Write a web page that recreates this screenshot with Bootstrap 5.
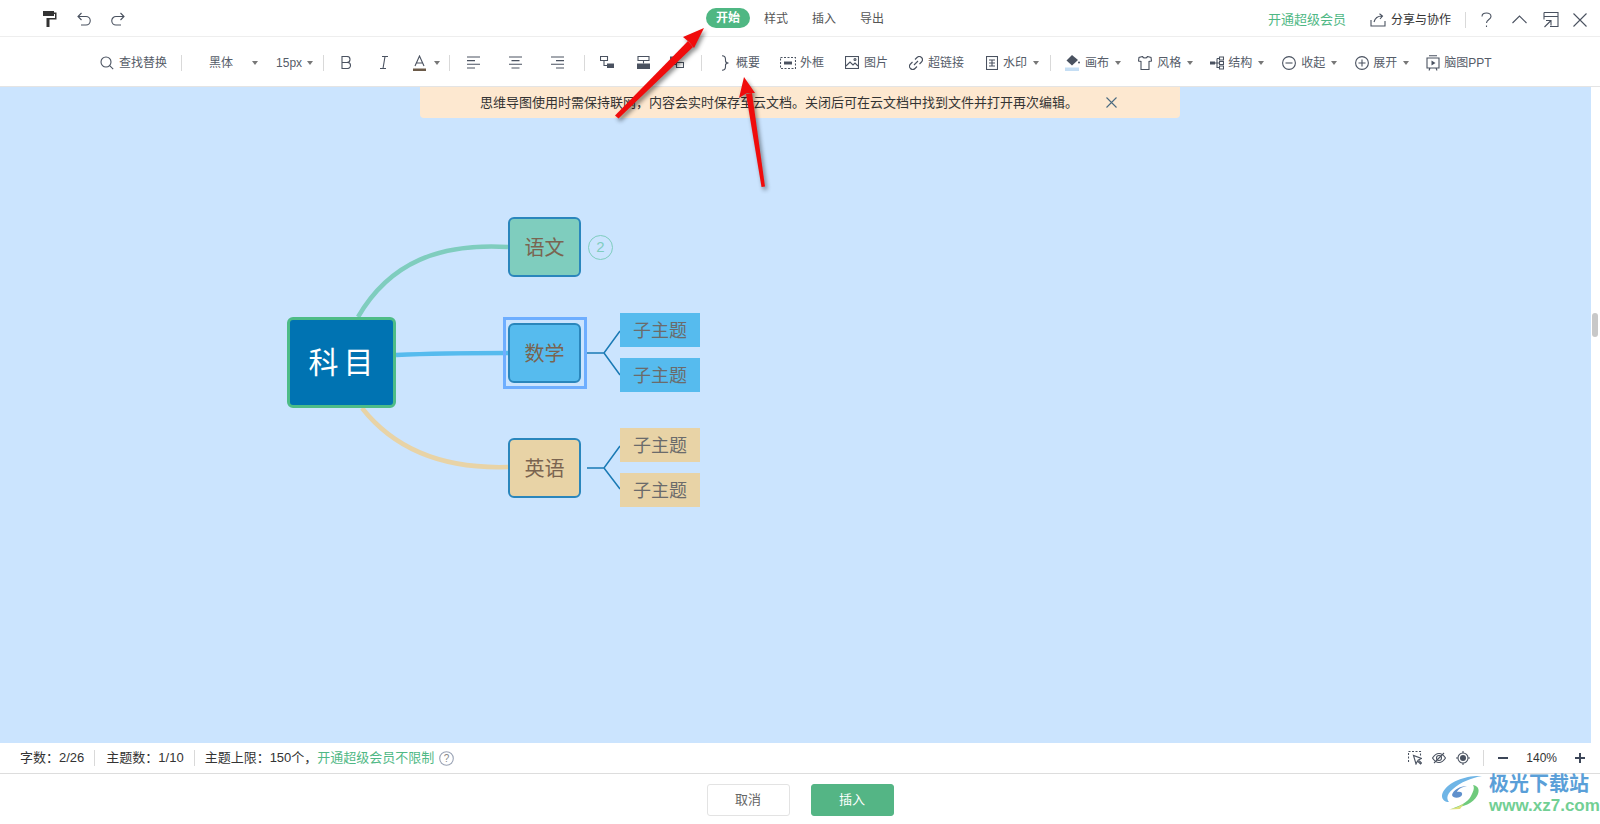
<!DOCTYPE html>
<html lang="zh-CN">
<head>
  <meta charset="UTF-8">
  <title>思维导图</title>
  <link href="https://cdn.jsdelivr.net/npm/bootstrap@5.3.0/dist/css/bootstrap.min.css" rel="stylesheet">
  <style>
    html, body { height: 100%; }
    body {
      font-family: "Liberation Sans", "Noto Sans CJK SC", sans-serif;
      font-size: 12px;
      color: #333;
      overflow: hidden;
      background: #fff;
    }
    svg { display: block; flex: none; }
    .ic { fill: none; stroke: #4a5260; stroke-width: 1.1; }
    .ic-fill { fill: #4a5260; stroke: none; }

    .top-bar { height: 37px; border-bottom: 1px solid #eee; padding-left: 43px; padding-top: 1px; }
    .tool-bar { height: 50px; border-bottom: 1px solid #e4e4e4; padding-left: 100px; padding-top: 2px; color: #555c68; }
    .tab-group { left: 706px; top: 8px; }
    .tab-item { width: 24px; white-space: nowrap; color: #555; padding-top: 1px; }
    .tab-on { width: 44px; height: 20px; border-radius: 10px; background: #4fb783; color: #fff; font-weight: 700; }
    .top-right { right: 13px; top: 1px; height: 37px; }
    .vip { color: #4fb885; font-size: 13px; }

    .sep { width: 1px; height: 16px; background: #d9d9d9; flex: none; }
    .caret-mini { width: 0; height: 0; border: 3px solid transparent; border-top: 4px solid #777; border-bottom: 0; flex: none; }
    .t-txt { white-space: nowrap; flex: none; }
    .t-15 { width: 25px; }
    .ml-4 { margin-left: 4px; } .ml-5 { margin-left: 5px; } .ml-6 { margin-left: 6px; } .ml-8 { margin-left: 8px; }
    .ml-9 { margin-left: 9px; } .ml-10 { margin-left: 10px; } .ml-11 { margin-left: 11px; } .ml-12 { margin-left: 12px; }
    .ml-13 { margin-left: 13px; } .ml-14 { margin-left: 14px; } .ml-15 { margin-left: 15px; } .ml-16 { margin-left: 16px; }
    .ml-17 { margin-left: 17px; } .ml-18 { margin-left: 18px; } .ml-19 { margin-left: 19px; }
    .ml-20 { margin-left: 20px; } .ml-21 { margin-left: 21px; } .ml-22 { margin-left: 22px; }
    .ml-23 { margin-left: 23px; } .ml-24 { margin-left: 24px; } .ml-25 { margin-left: 25px; } .ml-27 { margin-left: 27px; }
    .ml-29 { margin-left: 29px; }

    .map-area { background: #cbe4fe; margin-right: 9px; }
    .scroll-thumb { right: 2px; top: 226px; width: 6px; height: 24px; border-radius: 3px; background: #c8c8c8; }
    .notice-bar {
      left: 420px; top: 0; width: 760px; height: 31px;
      background: #fde8d0; border-radius: 0 0 4px 4px; padding-left: 60px;
      color: #333; font-size: 13px;
    }
    .notice-x { left: 686px; top: 10px; }

    .map-lines { left: 0; top: 0; }
    .node { display: flex; align-items: center; justify-content: center; position: absolute; font-family: "Noto Sans CJK SC", sans-serif; }
    .node-root { left: 287px; top: 230px; width: 109px; height: 91px; padding: 0 0 4px 4px; background: #0073b2; border: 3px solid #4ebc87; border-radius: 6px; color: #fff; font-size: 30px; letter-spacing: 5px; }
    .node-main { width: 73px; height: 60px; left: 508px; border: 2px solid #2a86bc; border-radius: 6px; color: #7a6450; font-size: 20px; }
    .nm-a { top: 130px; background: #7fcdbe; }
    .nm-b { top: 236px; background: #56bbee; }
    .nm-c { top: 351px; background: #e8d3a6; }
    .node-select { position: absolute; left: 503px; top: 230px; width: 84px; height: 72px; border: 3px solid #6eaeff; }
    .node-sub { width: 80px; height: 34px; left: 620px; padding-bottom: 2px; color: #6b6b6b; font-size: 18px; }
    .ns-blue { background: #56bbee; }
    .ns-tan { background: #e8d3a6; }
    .ns-1 { top: 226px; } .ns-2 { top: 271px; } .ns-3 { top: 341px; } .ns-4 { top: 386px; }
    .count-dot { position: absolute; left: 588px; top: 148px; width: 25px; height: 25px; border: 1.5px solid #7fcdbe; border-radius: 50%; color: #7fcdbe; font-size: 15px; display: flex; align-items: center; justify-content: center; }

    .status-bar { height: 31px; border-bottom: 1px solid #ddd; padding-left: 20px; padding-right: 15px; font-size: 13px; }
    .status-right { font-size: 12px; }
    .vip-link { color: #4fb885; }
    .foot-bar { height: 50px; padding-top: 10px; gap: 21px; }
    .btn-cancel, .btn-insert { width: 83px; height: 32px; padding: 0; font-size: 13px; border-radius: 3px; }
    .btn-cancel { background: #fff; border: 1px solid #e3e3e3; color: #666; }
    .btn-insert { background: #54b585; border: 1px solid #54b585; color: #fff; }

    .arrows { left: 0; top: 0; pointer-events: none; filter: drop-shadow(2px 3px 2px rgba(0,0,0,.45)); }
    .wm-box { left: 1441px; top: 770px; }
    .wm-text { margin-left: 6px; }
    .wm-name { font-family: "Noto Sans CJK SC", sans-serif; font-size: 20px; font-weight: 700; color: #5a9fd8; line-height: 26px; }
    .wm-url { font-size: 17px; font-weight: 700; color: #72cf94; line-height: 20px; }
  </style>
</head>
<body class="d-flex flex-column position-relative">

  <div class="top-bar d-flex align-items-center position-relative flex-none">
    <svg width="14" height="16" viewBox="0 0 14 16"><path fill="#333" d="M0 0h11v5H0zM11 1.500h2.500V8.500H6.500V16h-3V7h8.500V3h-1z"/></svg>
    <svg class="ml-20" width="14" height="14" viewBox="0 0 14 14"><path class="ic" d="M4.500 1 1 4.500 4.500 8M1 4.500h8a4 4 0 0 1 0 8.500H4"/></svg>
    <svg class="ml-20" width="14" height="14" viewBox="0 0 14 14"><path class="ic" d="M9.500 1 13 4.500 9.500 8M13 4.500H5a4 4 0 0 0 0 8.500h5"/></svg>

    <div class="tab-group position-absolute d-flex align-items-center">
      <div class="tab-on d-flex align-items-center justify-content-center">开始</div>
      <div class="tab-item ml-14">样式</div>
      <div class="tab-item ml-24">插入</div>
      <div class="tab-item ml-24">导出</div>
    </div>

    <div class="top-right position-absolute d-flex align-items-center">
      <span class="vip">开通超级会员</span>
      <svg class="ml-24" width="16" height="14" viewBox="0 0 16 14"><path class="ic" d="M1 7v6h14V8M4 9c1-4 4-6 8-6M9.500 .7 12.500 3 10 6"/></svg>
      <span class="ml-5">分享与协作</span>
      <div class="sep ml-14"></div>
      <svg class="ml-15" width="11" height="16" viewBox="0 0 11 16"><path class="ic" d="M1 4.500C1 2 3 1 5.500 1S10 2.500 10 4.500c0 3-4.500 3-4.500 6.500M5.500 13.500v1.500"/></svg>
      <svg class="ml-20" width="15" height="9" viewBox="0 0 15 9"><path class="ic" d="M.5 8 7.500 1l7 7"/></svg>
      <svg class="ml-16" width="16" height="17" viewBox="0 0 16 17"><path class="ic" d="M1 1.500h14v14H7M1 1.500v4h14M1 5.500v3M1.500 16 8 9.500M3 9.500h5v5"/></svg>
      <svg class="ml-14" width="14" height="14" viewBox="0 0 14 14"><path class="ic" stroke-width="1.3" d="m.5.5 13 13m0-13-13 13"/></svg>
    </div>
  </div>

  <div class="tool-bar d-flex align-items-center flex-none">
    <svg width="14" height="14" viewBox="0 0 14 14"><circle class="ic" cx="6" cy="6" r="5"/><path class="ic" d="m9.700 9.700 3.500 3.500"/></svg>
    <span class="t-txt ml-5">查找替换</span>
    <div class="sep ml-14"></div>
    <span class="t-txt ml-27">黑体</span>
    <div class="caret-mini ml-19"></div>
    <span class="t-txt t-15 ml-18">15px</span>
    <div class="caret-mini ml-6"></div>
    <div class="sep ml-10"></div>

    <svg class="ml-17" width="10" height="13" viewBox="0 0 10 13"><path class="ic" d="M1 .5h5a3 3 0 0 1 0 6H1zm0 6h5.500a3 3 0 0 1 0 6H1z"/></svg>
    <svg class="ml-29" width="8" height="13" viewBox="0 0 8 13"><path class="ic" d="M2 .5h6M0 12.500h6M5 .5l-2 12"/></svg>
    <svg class="ml-25" width="13" height="16" viewBox="0 0 13 16"><path class="ic" d="m2 11 4.500-10L11 11M3.500 8h6"/><path fill="#6b5a48" d="M0 13.500h13V16H0z"/></svg>
    <div class="caret-mini ml-8"></div>
    <div class="sep ml-9"></div>

    <svg class="ml-17" width="13" height="13" viewBox="0 0 13 13"><path class="ic" d="M0 1h13M0 4.600h8M0 8.300h13M0 12h8"/></svg>
    <svg class="ml-29" width="13" height="13" viewBox="0 0 13 13"><path class="ic" d="M0 1h13M2.500 4.600h8M0 8.300h13M2.500 12h8"/></svg>
    <svg class="ml-29" width="13" height="13" viewBox="0 0 13 13"><path class="ic" d="M0 1h13M5 4.600h8M0 8.300h13M5 12h8"/></svg>
    <div class="sep ml-20"></div>

    <svg class="ml-15" width="14" height="13" viewBox="0 0 14 13"><path class="ic" d="M.5.500h7v4h-7zM4 4.500v5h3"/><path class="ic-fill" d="M7 7.500h7V12H7z"/></svg>
    <svg class="ml-23" width="13" height="14" viewBox="0 0 13 14"><path class="ic" d="M1 .5h11v4H1zM6.500 4.500v3"/><path class="ic-fill" d="M0 7.500h13V13H0z"/></svg>
    <svg class="ml-20" width="14" height="13" viewBox="0 0 14 13"><path class="ic-fill" d="M0 .5h7V4H0z"/><path class="ic" d="M3.500 4v4.500H6M6.500 6.500h7v5h-7z"/></svg>
    <div class="sep ml-17"></div>

    <svg class="ml-19" width="9" height="16" viewBox="0 0 9 16"><path class="ic" d="M1 .7c3 0 3.500 1.500 3.500 3.500v1.500c0 1.500 1 2.300 3 2.300-2 0-3 .8-3 2.300v1.500c0 2-.5 3.500-3.500 3.500"/></svg>
    <span class="t-txt ml-6">概要</span>
    <svg class="ml-20" width="16" height="12" viewBox="0 0 16 12"><rect class="ic" stroke-dasharray="2 1.500" x=".5" y=".5" width="15" height="11"/><path class="ic-fill" d="M4 4.500h8v3H4z"/></svg>
    <span class="t-txt ml-4">外框</span>
    <svg class="ml-21" width="14" height="13" viewBox="0 0 14 13"><rect class="ic" x=".5" y=".5" width="13" height="12"/><path class="ic" d="m1 10 4-4 3 3 2-2 3 3"/><circle class="ic" cx="10" cy="3.500" r="1"/></svg>
    <span class="t-txt ml-5">图片</span>
    <svg class="ml-21" width="14" height="14" viewBox="0 0 14 14"><path class="ic" d="M6 3.500 8 1.500a3 3 0 0 1 4.500 4.500L10.500 8M8 10.500 6 12.500A3 3 0 0 1 1.500 8L3.500 6M5 9l4-4"/></svg>
    <span class="t-txt ml-5">超链接</span>
    <svg class="ml-22" width="12" height="14" viewBox="0 0 12 14"><rect class="ic" x=".5" y=".5" width="11" height="13"/><path class="ic" d="M3 4h6M3 7h6M3 10h6M6 4v6"/></svg>
    <span class="t-txt ml-5">水印</span>
    <div class="caret-mini ml-6"></div>
    <div class="sep ml-11"></div>

    <svg class="ml-14" width="15" height="16" viewBox="0 0 15 16"><path class="ic-fill" d="M7 0 13 5 7 10.500 1.500 5.500z"/><circle class="ic-fill" cx="14" cy="7.500" r="1"/><path fill="#c5def4" d="M0 12.500h14V16H0z"/></svg>
    <span class="t-txt ml-5">画布</span>
    <div class="caret-mini ml-6"></div>
    <svg class="ml-17" width="14" height="14" viewBox="0 0 14 14"><path class="ic" d="M4.500.5 1 1.500.5 5 3 5.500V13.500h8V5.500l2.500-.5L13 1.500 9.500.5C9 2.500 5 2.500 4.500.5z"/></svg>
    <span class="t-txt ml-5">风格</span>
    <div class="caret-mini ml-6"></div>
    <svg class="ml-17" width="14" height="14" viewBox="0 0 14 14"><path class="ic-fill" d="M0 5.500h5v3H0z"/><path class="ic" d="M5 7h4M7 2.500V11.500H9M7 2.500h2M9.500 1h4v3h-4zM9.500 5.500h4v3h-4zM9.500 10h4v3h-4z"/></svg>
    <span class="t-txt ml-4">结构</span>
    <div class="caret-mini ml-6"></div>
    <svg class="ml-18" width="14" height="14" viewBox="0 0 14 14"><circle class="ic" cx="7" cy="7" r="6.400"/><path class="ic" d="M3.500 7h7"/></svg>
    <span class="t-txt ml-5">收起</span>
    <div class="caret-mini ml-6"></div>
    <svg class="ml-18" width="14" height="14" viewBox="0 0 14 14"><circle class="ic" cx="7" cy="7" r="6.400"/><path class="ic" d="M3.500 7h7M7 3.500v7"/></svg>
    <span class="t-txt ml-4">展开</span>
    <div class="caret-mini ml-6"></div>
    <svg class="ml-17" width="14" height="16" viewBox="0 0 14 16"><path class="ic" d="M3 .7h8M1 3h12v10H1zM3 15.500 4 13m7 2.500L10 13"/><path class="ic-fill" d="M5.500 5.500 9.500 8l-4 2.500z"/></svg>
    <span class="t-txt ml-4">脑图PPT</span>
  </div>

  <div class="flex-grow-1 d-flex position-relative">
    <div class="map-area flex-grow-1 position-relative overflow-hidden">
      <svg class="map-lines position-absolute" width="1591" height="656" viewBox="0 87 1591 656" fill="none">
        <path d="M358 317C390 262 440 243 508 247" stroke="#7fcdbe" stroke-width="4.500"/>
        <path d="M396 355C440 353 470 353 508 353" stroke="#56bbee" stroke-width="4.500"/>
        <path d="M362 408C395 450 445 469 508 467" stroke="#e8d3a6" stroke-width="4.500"/>
        <path d="M587 353H604L620 331M604 353 620 375M587 468H604L620 446M604 468 620 489" stroke="#1a7ab5" stroke-width="1.500"/>
      </svg>

      <div class="node node-root">科目</div>
      <div class="node node-main nm-a">语文</div>
      <div class="count-dot">2</div>
      <div class="node-select"></div>
      <div class="node node-main nm-b">数学</div>
      <div class="node node-main nm-c">英语</div>
      <div class="node node-sub ns-blue ns-1">子主题</div>
      <div class="node node-sub ns-blue ns-2">子主题</div>
      <div class="node node-sub ns-tan ns-3">子主题</div>
      <div class="node node-sub ns-tan ns-4">子主题</div>

      <div class="notice-bar position-absolute d-flex align-items-center">
        思维导图使用时需保持联网，内容会实时保存至云文档。关闭后可在云文档中找到文件并打开再次编辑。
        <svg class="notice-x position-absolute" width="11" height="11" viewBox="0 0 11 11"><path d="m.5.5 10 10m0-10-10 10" stroke="#4a6a80" stroke-width="1.100"/></svg>
      </div>
    </div>
    <div class="scroll-thumb position-absolute"></div>
  </div>

  <div class="status-bar d-flex align-items-center flex-none">
    <span>字数：2/26</span>
    <div class="sep ml-10"></div>
    <span class="ml-11">主题数：1/10</span>
    <div class="sep ml-10"></div>
    <span class="ml-10">主题上限：150个，</span><span class="vip-link">开通超级会员不限制</span>
    <svg class="ml-5" width="15" height="15" viewBox="0 0 15 15"><circle cx="7.500" cy="7.500" r="6.800" fill="none" stroke="#9aa3b5" stroke-width="1.100"/><text x="7.500" y="11" text-anchor="middle" font-size="10" fill="#888">?</text></svg>

    <div class="status-right ms-auto d-flex align-items-center">
      <svg width="14" height="14" viewBox="0 0 14 14"><path class="ic" stroke-dasharray="2 1.500" d="M.5 11V.5h12V5"/><path class="ic" d="m5.500 4.500 2.500 8.500 1.500-3 3 3 1-1-3-3 3-1.500z"/></svg>
      <svg class="ml-10" width="14" height="12" viewBox="0 0 14 12"><path class="ic" d="M.5 6C3 2 5 1.500 7 1.500S11 2 13.500 6C11 10 9 10.500 7 10.500S3 10 .5 6z"/><circle class="ic" cx="7" cy="6" r="2.500"/><path class="ic" d="M2 11 12 1"/></svg>
      <svg class="ml-10" width="14" height="14" viewBox="0 0 14 14"><circle class="ic" cx="7" cy="7" r="5"/><circle class="ic-fill" cx="7" cy="7" r="3"/><path class="ic" d="M7 0v2M7 12v2M0 7h2M12 7h2"/></svg>
      <div class="sep ml-13"></div>
      <svg class="ml-14" width="10" height="10" viewBox="0 0 10 10"><path d="M0 5h10" stroke="#3c4658" stroke-width="2"/></svg>
      <span class="ml-18">140%</span>
      <svg class="ml-18" width="10" height="10" viewBox="0 0 10 10"><path d="M0 5h10M5 0v10" stroke="#3c4658" stroke-width="2"/></svg>
    </div>
  </div>

  <div class="foot-bar d-flex justify-content-center flex-none">
    <button type="button" class="btn btn-cancel">取消</button>
    <button type="button" class="btn btn-insert">插入</button>
  </div>

  <svg class="arrows position-absolute" width="1600" height="824" viewBox="0 0 1600 824">
    <path d="M615 115.500 618.500 118.500 693 47 688 41z" fill="#f00c0c"/>
    <path d="M704 28 694 48 689 42 683 37z" fill="#f00c0c"/>
    <path d="M761.500 187 765 186.500 752 93 746 94z" fill="#f00c0c"/>
    <path d="M744 77 755 93 747 93 739 98z" fill="#f00c0c"/>
  </svg>

  <div class="wm-box position-absolute d-flex">
    <svg width="42" height="40" viewBox="0 0 42 40">
      <path d="M41 6C26 5 8 11 2 22-1 28 3 32 8 32 5 28 6 24 12 19 20 12 30 8 41 6z" fill="#6fb5e6"/>
      <path d="M11 25c1-5 8-9 15-9-5 1-9 3-10 6 3-1 6 0 5 3-1 3-9 4-10 0z" fill="#5f90cc"/>
      <path d="M32 15c6 1 7 6 4 11-4 7-13 11-26 13 9-3 17-7 20-13 2-4 4-8 2-11z" fill="#6fca7c"/>
      <path d="M8 39.500c5-1 11-3 15-6l-4 5.500z" fill="#dfe07a"/>
    </svg>
    <div class="wm-text">
      <div class="wm-name">极光下载站</div>
      <div class="wm-url">www.xz7.com</div>
    </div>
  </div>

</body>
</html>
